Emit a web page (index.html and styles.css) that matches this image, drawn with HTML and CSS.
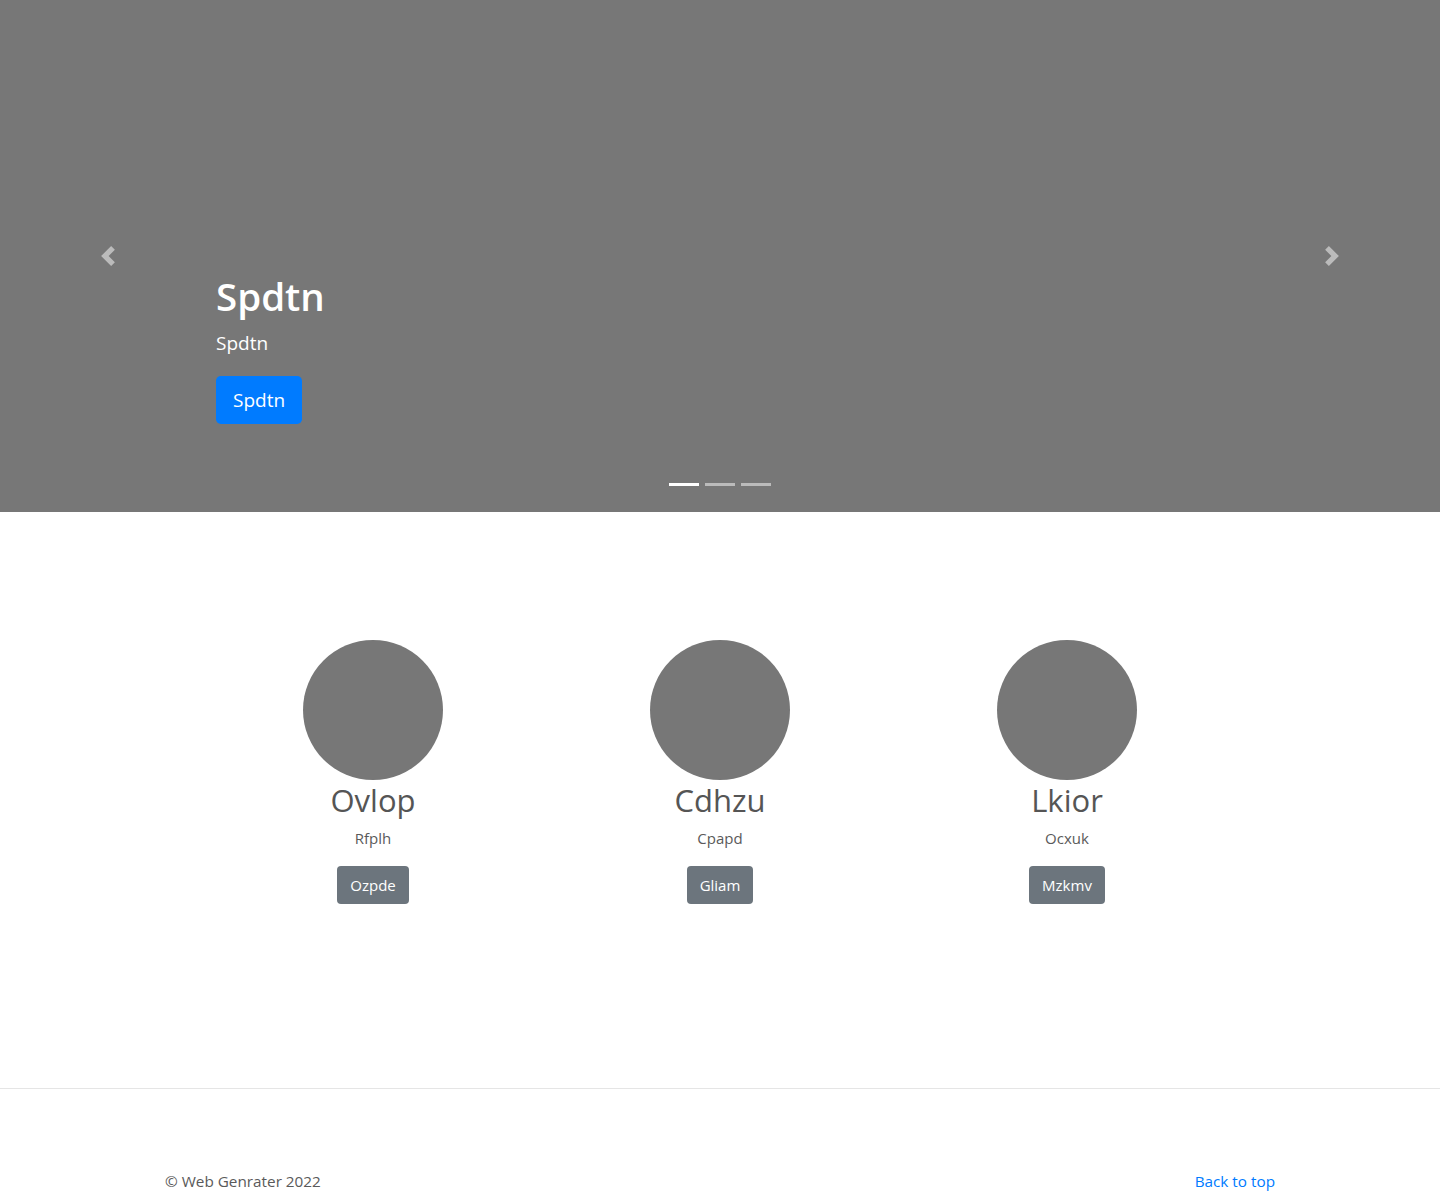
FILE: index.html
```html
<!DOCTYPE html>
<html lang="en">
<head>
<meta charset="utf-8">
<title>Carousel</title>
<link rel="stylesheet" href="styles.css">
</head>
<body>
<main>
  <section class="carousel">
    <div class="caption">
      <h1 class="caption-title">Spdtn</h1>
      <p class="caption-text">Spdtn</p>
      <a class="btn btn-primary btn-lg" href="#">Spdtn</a>
    </div>
    <a class="control control-prev" href="#" aria-label="Previous">
      <svg width="20" height="20" viewBox="0 0 8 8" fill="#fff"><path d="M5.25 0l-4 4 4 4 1.5-1.5L4.25 4l2.5-2.5L5.25 0z"/></svg>
    </a>
    <a class="control control-next" href="#" aria-label="Next">
      <svg width="20" height="20" viewBox="0 0 8 8" fill="#fff"><path d="M2.75 0l-1.5 1.5L3.75 4l-2.5 2.5L2.75 8l4-4-4-4z"/></svg>
    </a>
    <ol class="indicators">
      <li class="active"></li>
      <li></li>
      <li></li>
    </ol>
  </section>

  <section class="marketing">
    <div class="feature">
      <div class="circle"></div>
      <h2 class="feature-title">Ovlop</h2>
      <p class="feature-text">Rfplh</p>
      <a class="btn btn-secondary" href="#">Ozpde</a>
    </div>
    <div class="feature">
      <div class="circle"></div>
      <h2 class="feature-title">Cdhzu</h2>
      <p class="feature-text">Cpapd</p>
      <a class="btn btn-secondary" href="#">Gliam</a>
    </div>
    <div class="feature">
      <div class="circle"></div>
      <h2 class="feature-title">Lkior</h2>
      <p class="feature-text">Ocxuk</p>
      <a class="btn btn-secondary" href="#">Mzkmv</a>
    </div>
  </section>

  <hr class="divider">

  <footer class="footer">
    <p class="copyright">&copy; Web Genrater 2022</p>
    <a class="top-link" href="#">Back to top</a>
  </footer>
</main>
</body>
</html>
```

FILE: styles.css
```css
* { box-sizing: border-box; }

html, body {
  margin: 0;
  padding: 0;
}

body {
  font-family: "Open Sans", "Noto Sans", "Liberation Sans", sans-serif;
  font-size: 16px;
  line-height: 1.5;
  color: #5a5a5a;
  background: #fff;
  padding-bottom: 48px;
}

.carousel {
  position: relative;
  height: 512px;
  background: #777;
  display: flex;
  flex-direction: column;
  justify-content: flex-end;
  padding: 0 216px 88px;
}

.caption {
  color: #fff;
  display: flex;
  flex-direction: column;
  align-items: flex-start;
}

.caption-title {
  margin: 0 0 11px;
  font-size: 38.5px;
  font-weight: 600;
  line-height: 48px;
}

.caption-text {
  margin: 0 0 21px;
  font-size: 19px;
  line-height: 24px;
}

.btn {
  display: inline-block;
  text-decoration: none;
  color: #fff;
  border-radius: 4px;
}

.btn-primary {
  background: #007bff;
}

.btn-lg {
  font-size: 19px;
  line-height: 30px;
  padding: 9px 17px;
  border-radius: 4.8px;
}

.btn-secondary {
  background: #6c757d;
  font-size: 15px;
  line-height: 24px;
  padding: 7px 13px;
}

.control {
  position: absolute;
  top: 0;
  bottom: 0;
  width: 216px;
  display: flex;
  align-items: center;
  justify-content: center;
  opacity: 0.5;
}

.control-prev { left: 0; }
.control-next { right: 0; }

.indicators {
  position: absolute;
  left: 0;
  right: 0;
  bottom: 16px;
  margin: 0;
  padding: 0;
  list-style: none;
  display: flex;
  justify-content: center;
}

.indicators li {
  width: 30px;
  height: 3px;
  margin: 10px 3px;
  background: #fff;
  opacity: 0.5;
}

.indicators li.active { opacity: 1; }

.marketing {
  width: 1041px;
  margin: 0 auto;
  padding-top: 128px;
  display: grid;
  grid-template-columns: repeat(3, 1fr);
  text-align: center;
}

.feature {
  display: flex;
  flex-direction: column;
  align-items: center;
}

.circle {
  width: 140px;
  height: 140px;
  border-radius: 50%;
  background: #777;
}

.feature-title {
  margin: 1px 0 7px;
  font-size: 31px;
  font-weight: 400;
  line-height: 38px;
  color: #555;
}

.feature-text {
  margin: 0 0 16px;
  font-size: 15px;
  line-height: 24px;
}

.divider {
  margin: 184px 0 80px;
  border: 0;
  border-top: 1px solid rgba(0, 0, 0, 0.1);
  height: 0;
}

.footer {
  width: 1110px;
  margin: 0 auto;
  display: flex;
  justify-content: space-between;
  font-size: 15.3px;
  line-height: 24px;
}

.copyright {
  margin: 0 0 16px;
}

.top-link {
  color: #007bff;
  text-decoration: none;
}
```
